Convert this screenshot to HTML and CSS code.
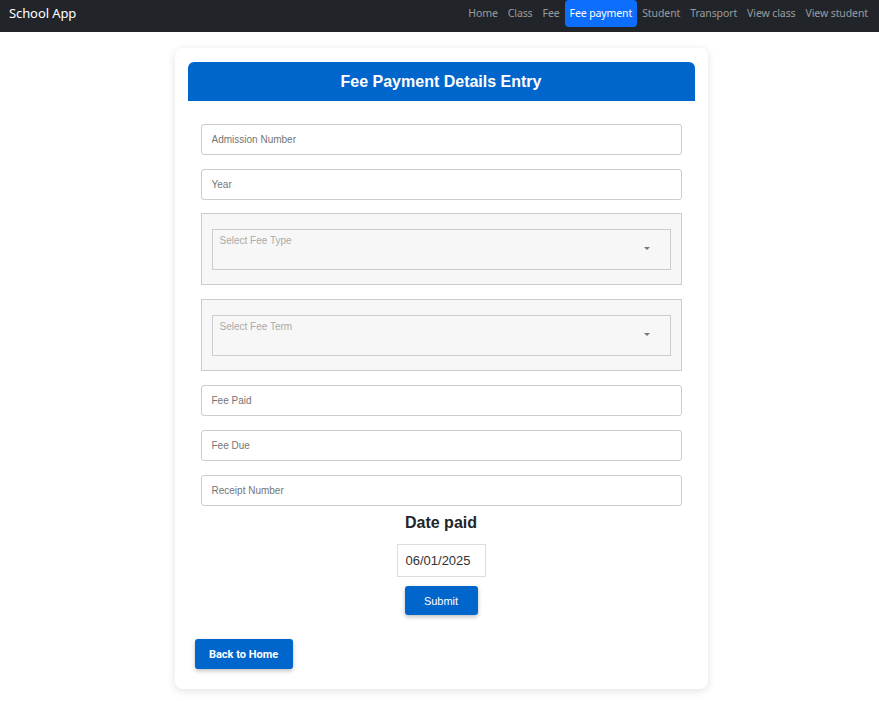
FILE: index.html
```html
<!DOCTYPE html>
<html lang="en">
<head>
<meta charset="utf-8">
<title>School App</title>
<link rel="stylesheet" href="styles.css">
</head>
<body>
<nav class="navbar">
  <a class="brand" href="#">School App</a>
  <ul class="nav">
    <li><a class="nav-link" href="#">Home</a></li>
    <li><a class="nav-link" href="#">Class</a></li>
    <li><a class="nav-link" href="#">Fee</a></li>
    <li><a class="nav-link active" href="#">Fee payment</a></li>
    <li><a class="nav-link" href="#">Student</a></li>
    <li><a class="nav-link" href="#">Transport</a></li>
    <li><a class="nav-link" href="#">View class</a></li>
    <li><a class="nav-link" href="#">View student</a></li>
  </ul>
</nav>
<main class="card">
  <h1 class="card-title">Fee Payment Details Entry</h1>
  <form class="form">
    <input class="field" type="text" placeholder="Admission Number">
    <input class="field" type="text" placeholder="Year">
    <div class="select-wrap">
      <div class="select">
        <span class="select-label">Select Fee Type</span>
        <span class="arrow"></span>
      </div>
    </div>
    <div class="select-wrap">
      <div class="select">
        <span class="select-label">Select Fee Term</span>
        <span class="arrow"></span>
      </div>
    </div>
    <input class="field" type="text" placeholder="Fee Paid">
    <input class="field" type="text" placeholder="Fee Due">
    <input class="field" type="text" placeholder="Receipt Number">
    <h2 class="date-title">Date paid</h2>
    <div class="date-input">06/01/2025</div>
    <button class="btn submit" type="button">Submit</button>
  </form>
  <div class="back-row">
    <button class="btn back" type="button">Back to Home</button>
  </div>
</main>
</body>
</html>
```

FILE: styles.css
```css
* { box-sizing: border-box; }
body {
  margin: 0;
  background: #fff;
  font-family: "Liberation Sans", Arial, sans-serif;
  color: #212529;
}
.navbar {
  height: 32px;
  background: #212529;
  display: flex;
  align-items: flex-start;
  justify-content: space-between;
  padding: 0 6px 0 9px;
}
.brand {
  color: #fff;
  text-decoration: none;
  font-family: "Noto Sans", sans-serif;
  font-size: 13px;
  letter-spacing: -0.1px;
  line-height: 27px;
}
.nav {
  list-style: none;
  margin: 0;
  padding: 0;
  display: flex;
}
.nav-link {
  display: block;
  color: rgba(255,255,255,0.55);
  text-decoration: none;
  font-family: "Noto Sans", sans-serif;
  font-size: 10.5px;
  letter-spacing: -0.1px;
  line-height: 27px;
  padding: 0 5px;
  border-radius: 4px;
}
.nav-link.active {
  background: #0d6efd;
  color: #fff;
}
.card {
  width: 533px;
  margin: 16px 0 12px calc(50% - 265px);
  background: #fff;
  border-radius: 8px;
  box-shadow: 0 2px 8px rgba(0,0,0,0.12);
  padding: 14px 13px 20px;
}
.card-title {
  margin: 0;
  height: 39px;
  background: #0066cc;
  color: #fff;
  border-radius: 6px 6px 0 0;
  font-size: 16px;
  font-weight: bold;
  text-align: center;
  line-height: 39px;
}
.form {
  display: flex;
  flex-direction: column;
  align-items: center;
  padding: 23px 13px 0;
  gap: 14px;
}
.field {
  width: 100%;
  height: 31px;
  border: 1px solid #ccc;
  border-radius: 3px;
  padding: 0 10px;
  font-family: "Liberation Sans", Arial, sans-serif;
  font-size: 10px;
  color: #333;
  background: #fff;
}
.field::placeholder { color: #757575; }
.select-wrap {
  width: 100%;
  height: 72px;
  background: #f7f7f7;
  border: 1px solid #ccc;
  padding: 15px 10px 14px;
}
.select-wrap:first-of-type { margin-top: -1px; }
.select {
  height: 41px;
  border: 1px solid #ccc;
  display: flex;
  justify-content: space-between;
  padding: 5px 20px 0 7px;
}
.select-label {
  font-size: 10px;
  color: #aaa;
}
.arrow {
  width: 0;
  height: 0;
  border-left: 3px solid transparent;
  border-right: 3px solid transparent;
  border-top: 3px solid #777;
  margin-top: 12px;
}
.date-title {
  margin: -8px 0 -2px;
  font-size: 16px;
  font-weight: bold;
  line-height: 22px;
}
.date-input {
  width: 89px;
  height: 33px;
  border: 1px solid #ddd;
  font-size: 13px;
  color: #333;
  line-height: 31px;
  padding-left: 8px;
  margin-top: -2px;
}
.btn {
  border: none;
  background: #0066cc;
  color: #fff;
  border-radius: 3px;
  font-family: "Liberation Sans", Arial, sans-serif;
  font-size: 11px;
  box-shadow: 0 2px 4px rgba(0,0,0,0.25);
}
.submit {
  width: 73px;
  height: 29px;
  margin-top: -5px;
}
.back-row {
  padding: 24px 0 0 7px;
}
.back {
  width: 98px;
  height: 30px;
  font-family: Roboto, sans-serif;
  font-weight: bold;
}
```
